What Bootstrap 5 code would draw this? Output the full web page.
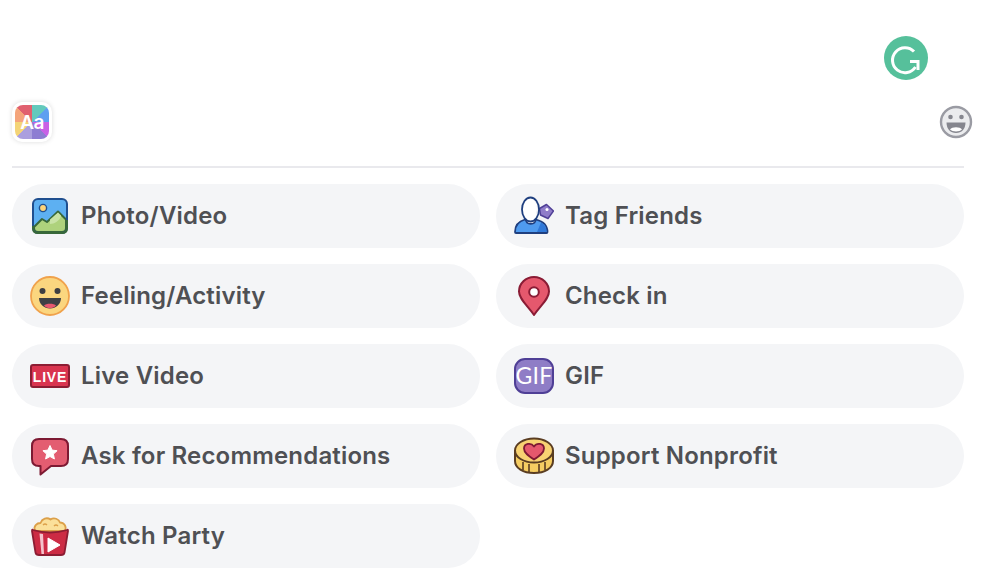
<!DOCTYPE html>
<html lang="en">
<head>
<meta charset="utf-8">
<title>Create post</title>
<link rel="stylesheet" href="https://cdn.jsdelivr.net/npm/bootstrap@5.3.0/dist/css/bootstrap.min.css">
<style>
html,body{height:100%;overflow:hidden;background:#fff}
.composer-wrap{padding:0 20px 0 12px;position:relative;height:580px}
.grammarly-float{position:absolute;left:884px;top:36px;width:44px;height:44px}
.composer-head{padding-top:102px;padding-bottom:24px;border-bottom:2px solid #e9e9ed;margin-bottom:16px}
.aa-frame{width:40px;height:40px;padding:3px;background:#fff;border-radius:10px;box-shadow:0 0 5px rgba(0,0,0,.14)}
.aa-tile{width:100%;height:100%;border-radius:8px;color:#fff;font:600 19px/35px Inter,"Liberation Sans",sans-serif;letter-spacing:-.5px;text-align:center;background:conic-gradient(#63c9bc 0 45deg,#5f9ff0 45deg 90deg,#c862e6 90deg 135deg,#8d7dd2 135deg 180deg,#ab9fde 180deg 225deg,#f4d477 225deg 270deg,#f4a47a 270deg 315deg,#e0606f 315deg 360deg)}
.smile-icon{width:36px;height:36px;margin-right:-10px}
.action-pill{height:64px;width:100%;padding:0 18px;gap:12px;border:0;border-radius:32px;background:#f4f5f7;color:#4f5054;font:600 24px/1 Inter,"Liberation Sans",sans-serif;letter-spacing:.18px}
.action-pill:hover{background:#eceef1;color:#4f5054}
.pill-icon{width:40px;height:40px;flex:none;margin-right:-1px}
.svg-word{font-family:"Liberation Sans",sans-serif;fill:#fff}
.svg-thin{font-family:Lato,"Liberation Sans",sans-serif;font-weight:400;fill:#fff}
</style>
</head>
<body>
<div class="composer-wrap">
  <svg class="grammarly-float" viewBox="0 0 44 44" aria-hidden="true">
    <circle cx="22" cy="22" r="22" fill="#56c09b"/>
    <path d="M30 15.500A12.500 12.500 0 1 0 31.500 31" fill="none" stroke="#fff" stroke-width="3"/>
    <path d="M26 25.500H34V34" fill="none" stroke="#fff" stroke-width="3"/>
  </svg>
  <div class="composer-head d-flex align-items-center justify-content-between">
    <div class="aa-frame"><div class="aa-tile">Aa</div></div>
    <svg class="smile-icon" viewBox="0 0 36 36" aria-hidden="true">
      <circle cx="18" cy="18" r="15" fill="#ebecee" stroke="#9a9ba3" stroke-width="2.400"/>
      <circle cx="12.500" cy="13" r="2.300" fill="#85868e"/>
      <circle cx="23.500" cy="13" r="2.300" fill="#85868e"/>
      <path d="M8.500 18.500H27.500C27.500 25 23.500 29 18 29S8.500 25 8.500 18.500Z" fill="#85868e"/>
      <path d="M12 25.500C14 22.500 22 22.500 24 25.500C21.500 28 14.500 28 12 25.500Z" fill="#fff"/>
    </svg>
  </div>
  <div class="row g-3">
    <div class="col-6"><button class="btn action-pill d-flex align-items-center" type="button">
      <svg class="pill-icon" viewBox="0 0 40 40" aria-hidden="true">
        <rect x="3" y="3" width="34" height="34" rx="5" fill="#5db0f2"/>
        <circle cx="13" cy="12" r="3.600" fill="#fbd47a" stroke="#1f4f8f" stroke-width="1.400"/>
        <path d="M4 31L12 23L17 26L28 15.500L36 23.500V32Q36 36 32 36H8Q4 36 4 32Z" fill="#aed27c" stroke="#38683a" stroke-width="2" stroke-linejoin="round"/>
        <path d="M20 23.500L28 16.500L31 19.500C30 25 24 28 20 28Z" fill="#c9e3a6"/>
        <rect x="3" y="3" width="34" height="34" rx="5" fill="none" stroke="#1f4f8f" stroke-width="2"/>
        <path d="M3 30V32Q3 37 8 37H32Q37 37 37 32V24" fill="none" stroke="#38683a" stroke-width="2"/>
      </svg><span>Photo/Video</span></button></div>
    <div class="col-6"><button class="btn action-pill d-flex align-items-center" type="button">
      <svg class="pill-icon" viewBox="0 0 40 40" aria-hidden="true">
        <path d="M25.500 12.500L32.500 8.500L39.500 15L34 22.500L26.500 19Z" fill="#8f7cc9" stroke="#4f3f96" stroke-width="1.500" stroke-linejoin="round"/>
        <circle cx="33" cy="13.500" r="1.500" fill="#fff"/>
        <path d="M1 36C1 28 5.500 25 11 23.500H22C28 25 33.500 28 33.500 36Q33.500 37 32.500 37H2Q1 37 1 36Z" fill="#4f9bef" stroke="#1f3f7f" stroke-width="1.800" stroke-linejoin="round"/>
        <path d="M27 26.500C30.500 28 32.500 31 32.500 36H23Z" fill="#2f78d8"/>
        <path d="M11.500 23C12 29.500 21.500 29.500 22 23" fill="#fff" stroke="#1f3f7f" stroke-width="1.600"/>
        <ellipse cx="16.500" cy="13.500" rx="8.500" ry="12" fill="#fff" stroke="#1f3f7f" stroke-width="1.800"/>
        <path d="M19 3.500C23 6 24 12 22 19C24 16 24.500 8 19 3.500Z" fill="#d5d6d9"/>
      </svg><span>Tag Friends</span></button></div>
    <div class="col-6"><button class="btn action-pill d-flex align-items-center" type="button">
      <svg class="pill-icon" viewBox="0 0 40 40" aria-hidden="true">
        <circle cx="20" cy="20" r="19" fill="#fbd67f" stroke="#f0a24c" stroke-width="1.800"/>
        <circle cx="12.500" cy="15" r="3" fill="#3e3e42"/>
        <circle cx="27.500" cy="15" r="3" fill="#3e3e42"/>
        <path d="M9 22H31C31 28 26 32.500 20 32.500S9 28 9 22Z" fill="#3f4045"/>
        <path d="M14 29.500C16 27 24 27 26 29.500C23 33 17 33 14 29.500Z" fill="#e8586f"/>
      </svg><span>Feeling/Activity</span></button></div>
    <div class="col-6"><button class="btn action-pill d-flex align-items-center" type="button">
      <svg class="pill-icon" viewBox="0 0 40 40" aria-hidden="true">
        <path d="M20 39C13 29 5 23 5 15.500A15 14.500 0 0 1 35 15.500C35 23 27 29 20 39Z" fill="#e5586d" stroke="#8a1c35" stroke-width="2" stroke-linejoin="round"/>
        <circle cx="20" cy="16" r="4.800" fill="#fff" stroke="#8a1c35" stroke-width="2"/>
      </svg><span>Check in</span></button></div>
    <div class="col-6"><button class="btn action-pill d-flex align-items-center" type="button">
      <svg class="pill-icon" viewBox="0 0 40 40" aria-hidden="true">
        <rect x="1" y="9" width="38" height="22" rx="2" fill="#d9344f" stroke="#8c1d33" stroke-width="2"/>
        <text class="svg-word" x="20" y="25.500" text-anchor="middle" font-size="14" font-weight="700" letter-spacing=".8">LIVE</text>
      </svg><span>Live Video</span></button></div>
    <div class="col-6"><button class="btn action-pill d-flex align-items-center" type="button">
      <svg class="pill-icon" viewBox="0 0 40 40" aria-hidden="true">
        <rect x="1" y="3" width="38" height="34" rx="10" fill="#8f7dc6" stroke="#4f3f96" stroke-width="2"/>
        <text class="svg-thin" x="20" y="28" text-anchor="middle" font-size="23">GIF</text>
      </svg><span>GIF</span></button></div>
    <div class="col-6"><button class="btn action-pill d-flex align-items-center" type="button">
      <svg class="pill-icon" viewBox="0 0 40 40" aria-hidden="true">
        <path d="M9 3H31Q38 3 38 10V23Q38 30 31 30H21L10.500 38.500V30H9Q2 30 2 23V10Q2 3 9 3Z" fill="#e35d71" stroke="#7d1a33" stroke-width="2" stroke-linejoin="round"/>
        <path d="M20 9.500L22.100 14.100L27.100 14.700L23.400 18.100L24.400 23L20 20.500L15.600 23L16.600 18.100L12.900 14.700L17.900 14.100Z" fill="#fff" stroke="#fff" stroke-width="1" stroke-linejoin="round"/>
      </svg><span>Ask for Recommendations</span></button></div>
    <div class="col-6"><button class="btn action-pill d-flex align-items-center" type="button">
      <svg class="pill-icon" viewBox="0 0 40 40" aria-hidden="true">
        <path d="M1 15V25C1 32 9 37 20 37S39 32 39 25V15Z" fill="#f6cd62" stroke="#5a3d22" stroke-width="2"/>
        <path d="M9 26V34M15 28V36M25 28V36M31 26V34" stroke="#5a3d22" stroke-width="1.600"/>
        <ellipse cx="20" cy="14.500" rx="19" ry="12" fill="#f8d272" stroke="#5a3d22" stroke-width="2"/>
        <path d="M20 23.500C14.500 20 10 17 10 12.500C10 7.500 17 6 20 10.500C23 6 30 7.500 30 12.500C30 17 25.500 20 20 23.500Z" fill="#e5586d" stroke="#7d1a33" stroke-width="1.800" stroke-linejoin="round"/>
      </svg><span>Support Nonprofit</span></button></div>
    <div class="col-6"><button class="btn action-pill d-flex align-items-center" type="button">
      <svg class="pill-icon" viewBox="0 0 40 40" aria-hidden="true">
        <path d="M5 15C3 10 7 7 10.500 7C12 2.500 17 1 20.500 3.500C24 1 29 3 30 6.500C34 6.500 37 10.500 35 15Z" fill="#fbe09a" stroke="#dca04a" stroke-width="1.800" stroke-linejoin="round"/>
        <path d="M13 9Q15 7 17 9M24 10Q26 8 28 10" fill="none" stroke="#dca04a" stroke-width="1.300"/>
        <path d="M3 14Q20 19 37 14Q38 13 38 15L34.500 36.500Q34 39 31 39H9Q6 39 5.500 36.500L2 15Q2 13 3 14Z" fill="#cc2b44" stroke="#8c1d33" stroke-width="1.800" stroke-linejoin="round"/>
        <path d="M9.500 17.500L11.500 38H14L13 18Z" fill="#f4c3cc"/>
        <path d="M18 22L30 29L18 36Z" fill="#fff" stroke="#fff" stroke-width="1" stroke-linejoin="round"/>
      </svg><span>Watch Party</span></button></div>
  </div>
</div>
</body>
</html>
